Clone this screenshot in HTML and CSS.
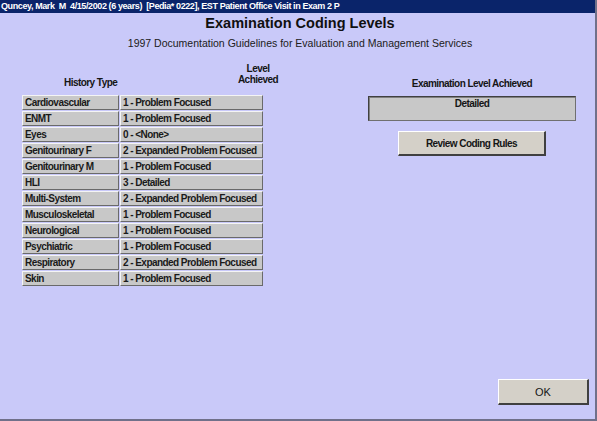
FILE: index.html
```html
<!DOCTYPE html>
<html>
<head>
<meta charset="utf-8">
<link rel="stylesheet" href="styles.css">
</head>
<body>
<div class="window">
  <div class="titlebar">Quncey, Mark&nbsp; M&nbsp; 4/15/2002 (6 years)&nbsp; [Pedia* 0222], EST Patient Office Visit in Exam 2 P</div>
  <div class="body">
    <h1 class="heading">Examination Coding Levels</h1>
    <div class="subtitle">1997 Documentation Guidelines for Evaluation and Management Services</div>
    <div class="main">
      <div class="left">
        <div class="table-head">
          <div class="th-history">History Type</div>
          <div class="th-level">Level<br>Achieved</div>
        </div>
        <div class="grid">
          <div class="cell">Cardiovascular</div><div class="cell">1 - Problem Focused</div>
          <div class="cell">ENMT</div><div class="cell">1 - Problem Focused</div>
          <div class="cell">Eyes</div><div class="cell">0 - &lt;None&gt;</div>
          <div class="cell">Genitourinary F</div><div class="cell">2 - Expanded Problem Focused</div>
          <div class="cell">Genitourinary M</div><div class="cell">1 - Problem Focused</div>
          <div class="cell">HLI</div><div class="cell">3 - Detailed</div>
          <div class="cell">Multi-System</div><div class="cell">2 - Expanded Problem Focused</div>
          <div class="cell">Musculoskeletal</div><div class="cell">1 - Problem Focused</div>
          <div class="cell">Neurological</div><div class="cell">1 - Problem Focused</div>
          <div class="cell">Psychiatric</div><div class="cell">1 - Problem Focused</div>
          <div class="cell">Respiratory</div><div class="cell">2 - Expanded Problem Focused</div>
          <div class="cell">Skin</div><div class="cell">1 - Problem Focused</div>
        </div>
      </div>
      <div class="right">
        <div class="exam-label">Examination Level Achieved</div>
        <div class="level-box">Detailed</div>
        <button class="btn btn-review">Review Coding Rules</button>
      </div>
    </div>
    <div class="footer">
      <button class="btn btn-ok">OK</button>
    </div>
  </div>
</div>
</body>
</html>
```
FILE: styles.css
```css
html, body {
  margin: 0;
  padding: 0;
}
body {
  width: 597px;
  height: 421px;
  overflow: hidden;
  background: #c9c9f9;
  font-family: "Liberation Sans", Arial, sans-serif;
  color: #151515;
}
.window {
  width: 597px;
  height: 421px;
  box-sizing: border-box;
  border-right: 2px solid #70708a;
  border-bottom: 2px solid #70708a;
  display: flex;
  flex-direction: column;
  background: #c9c9f9;
}
.titlebar {
  height: 13px;
  flex: none;
  background: #0a246a;
  color: #ffffff;
  font-family: "Liberation Sans", Arial, sans-serif;
  font-weight: bold;
  font-size: 9px;
  line-height: 13px;
  padding-left: 1px;
  letter-spacing: -0.4px;
  white-space: nowrap;
  overflow: hidden;
}
.body {
  flex: 1;
  display: flex;
  flex-direction: column;
}
.heading {
  margin: 1px 0 0 0;
  padding-left: 5px;
  font-size: 14.5px;
  line-height: 18px;
  font-weight: bold;
  text-align: center;
  color: #101010;
}
.subtitle {
  margin-top: 4px;
  padding-left: 5px;
  font-size: 10.5px;
  line-height: 14px;
  text-align: center;
  color: #202020;
}
.main {
  display: flex;
  padding-left: 22px;
}
.left {
  width: 241px;
  flex: none;
}
.table-head {
  height: 45px;
  display: flex;
  font-size: 10px;
  font-weight: bold;
  line-height: 11px;
  letter-spacing: -0.55px;
  white-space: nowrap;
}
.th-history {
  padding-top: 27px;
  margin-left: 42px;
  width: 120px;
  flex: none;
}
.th-level {
  padding-top: 13px;
  margin-left: 52px;
  width: 44px;
  flex: none;
  text-align: center;
}
.grid {
  display: grid;
  grid-template-columns: 97px 143px;
  grid-auto-rows: 15px;
  column-gap: 1px;
  row-gap: 1px;
}
.cell {
  box-sizing: border-box;
  background: #c8c8c8;
  border-top: 1px solid #f4f4f4;
  border-left: 1px solid #f4f4f4;
  border-right: 1px solid #6a6a6a;
  border-bottom: 1px solid #6a6a6a;
  font-size: 10px;
  font-weight: bold;
  line-height: 13px;
  padding-left: 2px;
  letter-spacing: -0.55px;
  white-space: nowrap;
  overflow: hidden;
  color: #1a1a1a;
}
.right {
  margin-left: 105px;
  width: 208px;
  display: flex;
  flex-direction: column;
  align-items: center;
}
.exam-label {
  margin-top: 28px;
  font-size: 10px;
  font-weight: bold;
  line-height: 12px;
  letter-spacing: -0.55px;
}
.level-box {
  margin-top: 6px;
  width: 208px;
  height: 25px;
  box-sizing: border-box;
  background: #c8c8c8;
  border-top: 1px solid #404040;
  border-left: 1px solid #404040;
  border-right: 1px solid #707070;
  border-bottom: 1px solid #707070;
  box-shadow: inset 1px 1px 0 #808080;
  font-size: 10px;
  font-weight: bold;
  line-height: 10px;
  letter-spacing: -0.55px;
  text-align: center;
  padding-top: 2px;
}
.btn {
  font-family: "Liberation Sans", Arial, sans-serif;
  background: #d4d0c8;
  box-sizing: border-box;
  border-top: 1px solid #ffffff;
  border-left: 1px solid #ffffff;
  border-right: 2px solid #404040;
  border-bottom: 2px solid #404040;
  padding: 0;
  color: #151515;
}
.btn-review {
  margin-top: 10px;
  width: 148px;
  height: 25px;
  font-size: 10px;
  font-weight: bold;
  letter-spacing: -0.55px;
}
.footer {
  margin-top: auto;
  display: flex;
  justify-content: flex-end;
  padding-right: 6px;
  padding-bottom: 14px;
}
.btn-ok {
  width: 91px;
  height: 26px;
  font-size: 11px;
}
```
